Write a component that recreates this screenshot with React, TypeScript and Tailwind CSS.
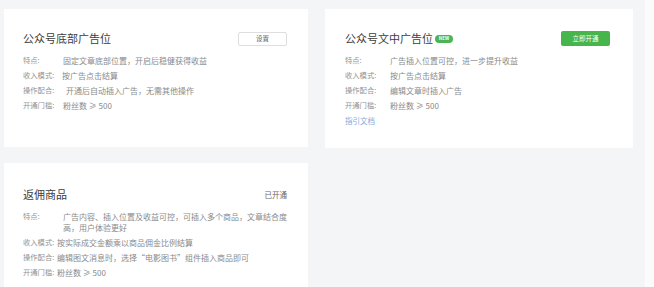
import React from "react";

type Row = { label: string; value: string; vw: string };

const card1: Row[] = [
  { label: "特点:", value: "固定文章底部位置，开启后稳健获得收益", vw: "w-[40px]" },
  { label: "收入模式:", value: "按广告点击结算", vw: "w-[39px]" },
  { label: "操作配合:", value: "开通后自动插入广告，无需其他操作", vw: "w-[43px]" },
  { label: "开通门槛:", value: "粉丝数 ≥ 500", vw: "w-[40px]" },
];

const card2: Row[] = [
  { label: "特点:", value: "广告插入位置可控，进一步提升收益", vw: "w-[45px]" },
  { label: "收入模式:", value: "按广告点击结算", vw: "w-[45px]" },
  { label: "操作配合:", value: "编辑文章时插入广告", vw: "w-[45px]" },
  { label: "开通门槛:", value: "粉丝数 ≥ 500", vw: "w-[45px]" },
];

const card3: Row[] = [
  {
    label: "特点:",
    value: "广告内容、插入位置及收益可控，可插入多个商品，文章结合度高，用户体验更好",
    vw: "w-[40px]",
  },
  { label: "收入模式:", value: "按实际成交金额乘以商品佣金比例结算", vw: "w-[34px]" },
  { label: "操作配合:", value: "编辑图文消息时，选择“电影图书”组件插入商品即可", vw: "w-[34px]" },
  { label: "开通门槛:", value: "粉丝数 ≥ 500", vw: "w-[34px]" },
];

function Rows({ rows }: { rows: Row[] }) {
  return (
    <div className="mt-[9px] flex flex-col gap-[4px] leading-[11px]">
      {rows.map((r) => (
        <div key={r.label} className="flex">
          <div className={`${r.vw} shrink-0 whitespace-nowrap text-[7.3px] text-[#939393]`}>{r.label}</div>
          <div className="w-[226px] shrink-0 text-[8px] text-[#8a8a8a]">{r.value}</div>
        </div>
      ))}
    </div>
  );
}

export default function App() {
  return (
    <div
      className="flex h-[287px] w-[654px] overflow-hidden"
      style={{ fontFamily: '"Noto Sans CJK SC", "Noto Sans", sans-serif' }}
    >
      <div className="w-[645px] bg-[#f4f5f7] pl-[4px] pt-[9px]">
        <div className="grid grid-cols-[304px_308px] gap-x-[17px] gap-y-[15px]">
          <div className="h-[138px] overflow-hidden bg-white pl-[19px] pr-[21px] pt-[22px]">
            <div className="flex h-[15px] items-center justify-between">
              <div className="text-[11px] leading-[15px] text-[#3d3d3d]">公众号底部广告位</div>
              <div className="flex h-[14px] w-[49px] items-center justify-center rounded-[2px] border border-[#dedede] bg-white text-[6.5px] text-[#666]">
                设置
              </div>
            </div>
            <Rows rows={card1} />
          </div>

          <div className="h-[139px] overflow-hidden bg-white pl-[20px] pr-[23px] pt-[22px]">
            <div className="flex h-[15px] items-center justify-between">
              <div className="flex items-center gap-[2px]">
                <div className="text-[11px] leading-[15px] text-[#3d3d3d]">公众号文中广告位</div>
                <div className="flex h-[8px] w-[18px] items-center justify-center rounded-full bg-[#4cb553] text-[4.5px] font-bold leading-none text-white">
                  NEW
                </div>
              </div>
              <div className="flex h-[15px] w-[49px] items-center justify-center rounded-[2px] bg-[#45b54c] text-[6.5px] text-white">
                立即开通
              </div>
            </div>
            <Rows rows={card2} />
            <div className="mt-[4px] text-[7.5px] leading-[11px] text-[#86aad8]">指引文档</div>
          </div>

          <div className="h-[140px] overflow-hidden bg-white pl-[19px] pr-[21px] pt-[24px]">
            <div className="flex h-[15px] items-center justify-between">
              <div className="text-[11px] leading-[15px] text-[#3d3d3d]">返佣商品</div>
              <div className="text-[7.5px] text-[#666]">已开通</div>
            </div>
            <Rows rows={card3} />
          </div>
        </div>
      </div>
      <div className="flex-1 bg-[#fbfbfc]" />
    </div>
  );
}
